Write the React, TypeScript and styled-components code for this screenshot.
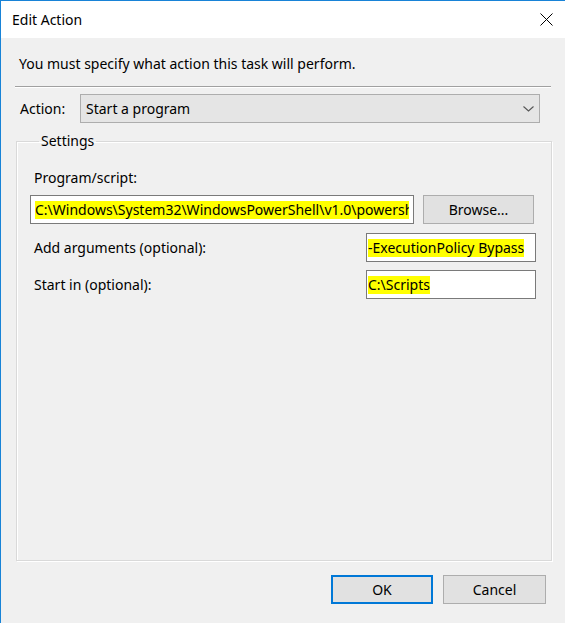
import React from 'react';
import styled, { createGlobalStyle } from 'styled-components';

const GlobalStyle = createGlobalStyle`
    html, body {
        margin: 0;
        padding: 0;
        background: #f0f0f0;
    }
    * {
        box-sizing: border-box;
    }
`;

const Window = styled.div`
    width: 565px;
    height: 623px;
    display: flex;
    flex-direction: column;
    border-top: 1px solid #1883d7;
    border-left: 1px solid #1883d7;
    background: #f0f0f0;
    font-family: "Segoe UI", "Noto Sans", sans-serif;
    font-size: 14px;
    color: #000;
    overflow: hidden;
`;

const TitleBar = styled.div`
    height: 37px;
    flex: none;
    display: flex;
    align-items: center;
    justify-content: space-between;
    padding: 0 12px 0 11px;
    background: #fff;
`;

const Title = styled.span`
    line-height: 20px;
`;

const CloseButton = styled.div`
    width: 14px;
    height: 14px;
    display: flex;
    align-items: center;
    justify-content: center;
`;

const Body = styled.div`
    flex: 1;
    display: flex;
    flex-direction: column;
    padding: 16px 0 0 0;
`;

const Intro = styled.div`
    line-height: 20px;
    padding-left: 18px;
`;

const Separator = styled.div`
    margin: 12px 14px 6px 14px;
    border-top: 1px solid #a0a0a0;
    border-bottom: 1px solid #fff;
`;

const ActionRow = styled.div`
    display: grid;
    grid-template-columns: 60px 460px;
    align-items: center;
    padding-left: 19px;
`;

const Label = styled.span<{ $indent?: number }>`
    line-height: 20px;
    white-space: nowrap;
    padding-left: ${p => p.$indent ?? 0}px;
`;

const Combo = styled.div`
    height: 29px;
    display: flex;
    align-items: center;
    justify-content: space-between;
    padding: 0 5px 0 5px;
    background: #e5e5e5;
    border: 1px solid #adadad;
`;

const GroupBox = styled.fieldset`
    margin: 8px 0 0 15px;
    width: 536px;
    height: 430px;
    padding: 17px 15px 0 13px;
    border: 1px solid #d9d9d9;
    box-shadow: inset 1px 1px 0 #fff, 1px 1px 0 #fff;
    display: flex;
    flex-direction: column;
`;

const Legend = styled.legend`
    margin-left: 9px;
    padding: 0 2px;
    line-height: 20px;
`;

const ProgramRow = styled.div`
    display: flex;
    gap: 9px;
    margin-top: 7px;
`;

const FieldRow = styled.div<{ $top: number }>`
    display: flex;
    align-items: center;
    justify-content: space-between;
    margin-top: ${p => p.$top}px;
`;

const TextBox = styled.div<{ $width: number; $inset: number }>`
    width: ${p => p.$width}px;
    height: 29px;
    flex: none;
    display: flex;
    align-items: center;
    padding: 0 ${p => p.$inset}px;
    background: #fff;
    border: 1px solid #7a7a7a;
`;

/* selected text inside a field; long paths are cut at the field edge */
const Selected = styled.span`
    display: block;
    max-width: 100%;
    overflow: hidden;
    white-space: nowrap;
    background: #ffff00;
    line-height: 18px;
`;

const Button = styled.button<{ $width: number; $default?: boolean }>`
    width: ${p => p.$width}px;
    height: 29px;
    flex: none;
    padding: 0;
    font: inherit;
    color: #000;
    background: #e1e1e1;
    border: ${p => (p.$default ? '2px solid #0078d7' : '1px solid #adadad')};
`;

const Footer = styled.div`
    display: flex;
    justify-content: flex-end;
    gap: 10px;
    padding: 14px 19px 0 0;
`;

const CloseIcon = () => (
    <svg width="13" height="13" viewBox="0 0 13 13">
        <path d="M0.5 0.5 L12.5 12.5 M12.5 0.5 L0.5 12.5" stroke="#000" strokeWidth="1" fill="none" />
    </svg>
);

const Chevron = () => (
    <svg width="11" height="6" viewBox="0 0 11 6">
        <polyline points="0.5,0.5 5.5,5 10.5,0.5" stroke="#555" strokeWidth="1.1" fill="none" />
    </svg>
);

const App: React.FC = () => {
    return (
        <>
            <GlobalStyle />
            <Window>
                <TitleBar>
                    <Title>Edit Action</Title>
                    <CloseButton>
                        <CloseIcon />
                    </CloseButton>
                </TitleBar>
                <Body>
                    <Intro>You must specify what action this task will perform.</Intro>
                    <Separator />
                    <ActionRow>
                        <Label>Action:</Label>
                        <Combo>
                            <span>Start a program</span>
                            <Chevron />
                        </Combo>
                    </ActionRow>
                    <GroupBox>
                        <Legend>Settings</Legend>
                        <Label $indent={4}>Program/script:</Label>
                        <ProgramRow>
                            <TextBox $width={384} $inset={4}>
                                <Selected>C:\Windows\System32\WindowsPowerShell\v1.0\powershell.exe</Selected>
                            </TextBox>
                            <Button $width={111}>Browse...</Button>
                        </ProgramRow>
                        <FieldRow $top={9}>
                            <Label $indent={4}>Add arguments (optional):</Label>
                            <TextBox $width={170} $inset={1}>
                                <Selected>-ExecutionPolicy Bypass</Selected>
                            </TextBox>
                        </FieldRow>
                        <FieldRow $top={8}>
                            <Label $indent={4}>Start in (optional):</Label>
                            <TextBox $width={170} $inset={1}>
                                <Selected>C:\Scripts</Selected>
                            </TextBox>
                        </FieldRow>
                    </GroupBox>
                    <Footer>
                        <Button $width={102} $default>OK</Button>
                        <Button $width={103}>Cancel</Button>
                    </Footer>
                </Body>
            </Window>
        </>
    );
};

export default App;
